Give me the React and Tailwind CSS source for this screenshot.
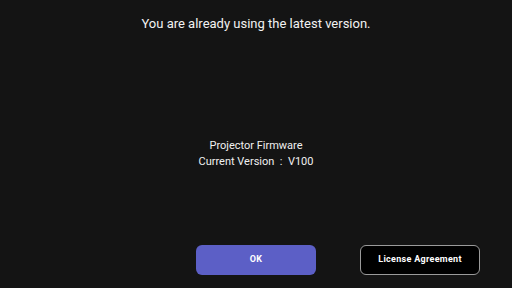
import React from 'react';

function App() {
  return (
    <div
      className="w-[512px] h-[288px] bg-[#141414] text-white flex flex-col overflow-hidden"
      style={{ fontFamily: 'Roboto, "Liberation Sans", sans-serif' }}
    >
      <h1 className="pt-[15px] text-center text-[13px] leading-[18px] text-[#f2f2f2]">
        You are already using the latest version.
      </h1>

      <div className="mt-[105px] flex flex-col items-center text-[11px] leading-[16px] text-[#f0f0f0]">
        <p>Projector Firmware</p>
        <p>Current Version&nbsp;&nbsp;:&nbsp;&nbsp;V100</p>
      </div>

      <div className="mt-[75px] grid grid-cols-[1fr_120px_1fr]">
        <div></div>
        <button className="h-[30px] rounded-[6px] bg-[#5c5fc6] text-[9px] font-bold tracking-[0.3px] text-white">
          OK
        </button>
        <div>
          <button className="ml-[44px] h-[30px] w-[120px] rounded-[6px] border-[1.5px] border-[#9a9a9a] bg-black text-[9px] font-bold tracking-[0.3px] text-white">
            License Agreement
          </button>
        </div>
      </div>
    </div>
  );
}

export default App;
